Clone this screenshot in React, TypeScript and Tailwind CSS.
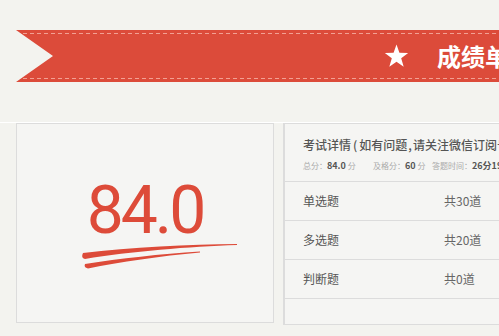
import React from "react";

const cjk = { fontFamily: '"Noto Sans CJK SC", "Noto Sans", sans-serif' };

function Star() {
  return (
    <svg width="25" height="24" viewBox="0 0 24 23" className="shrink-0">
      <path
        d="M12 0.5 L14.8 8.3 L23.2 8.5 L16.5 13.6 L18.9 21.8 L12 17 L5.1 21.8 L7.5 13.6 L0.8 8.5 L9.2 8.3 Z"
        fill="#ffffff"
      />
    </svg>
  );
}

function Brush() {
  return (
    <svg width="160" height="32" viewBox="0 0 160 32" className="block">
      <path
        d="M3,13 C50,7 110,4.5 157,4 L157,5 C110,6.5 50,11.5 5,19 Q0.5,18 3,13 Z"
        fill="#dd4b39"
      />
      <path
        d="M5,24 C40,18.5 80,14 120,11.5 L120,12.5 C80,16 40,22 8,28.5 Q3.5,27.5 5,24 Z"
        fill="#dd4b39"
      />
    </svg>
  );
}

function Row({ label, value }: { label: string; value: string }) {
  return (
    <div className="flex h-[39px] items-center border-b border-[#dcdcdc] pl-[18px] text-[12px] text-[#555]">
      <span className="w-[141px]">{label}</span>
      <span className="text-[#666]">{value}</span>
    </div>
  );
}

export default function App() {
  return (
    <div className="w-[499px] h-[336px] overflow-hidden bg-[#f3f3ef]" style={cjk}>
      {/* header band */}
      <div className="h-[123px] pt-[30px] border-b border-white">
        <div className="relative ml-[16px] h-[52px] bg-[#dc4b3a] [clip-path:polygon(0_0,100%_0,100%_100%,0_100%,37px_50%)]">
          <div className="absolute left-0 right-0 top-[3px] h-px bg-[repeating-linear-gradient(90deg,#f2a093_0_4px,transparent_4px_7px)]" />
          <div className="absolute left-0 right-0 bottom-[3px] h-px bg-[repeating-linear-gradient(90deg,#f2a093_0_4px,transparent_4px_7px)]" />
          <div className="flex h-full items-center pl-[368px] gap-[28px]">
            <Star />
            <span className="whitespace-nowrap text-[24px] font-bold text-white leading-none">成绩单</span>
          </div>
        </div>
      </div>

      {/* panels */}
      <div className="flex gap-[9px] pl-[16px]">
        <div className="w-[258px] h-[200px] shrink-0 border border-[#dcdcdc] bg-[#f5f5f3] flex flex-col items-center pt-[54px]">
          <div
            className="text-[66px] leading-none text-[#dd4b39] font-normal tracking-[-3px]"
            style={{ fontFamily: "Roboto, sans-serif" }}
          >
            84.0
          </div>
          <div className="-mt-[4px] ml-[30px]">
            <Brush />
          </div>
        </div>

        <div className="w-[260px] h-[202px] shrink-0 border-y border-l-2 border-[#dcdcdc] bg-[#f5f5f3]">
          <div className="h-[58px] border-b border-[#dcdcdc] pl-[18px] pt-[12px]">
            <div className="whitespace-nowrap text-[12px] leading-[18px] font-medium text-[#555]">
              考试详情<span className="mx-[2px]">(</span>如有问题<span className="mx-[1px]">,</span>请关注微信订阅号
            </div>
            <div className="mt-[5px] flex items-baseline whitespace-nowrap text-[8px] leading-[13px] text-[#aaa]">
              <span className="w-[70px] shrink-0">
                总分：<b className="text-[9px] text-[#555]">84.0</b> 分
              </span>
              <span className="w-[59px] shrink-0">
                及格分：<b className="text-[9px] text-[#555]">60</b> 分
              </span>
              <span className="shrink-0">
                答题时间：<b className="text-[9px] text-[#555]">26分19秒</b>
              </span>
            </div>
          </div>
          <Row label="单选题" value="共30道" />
          <Row label="多选题" value="共20道" />
          <Row label="判断题" value="共0道" />
        </div>
      </div>
    </div>
  );
}
